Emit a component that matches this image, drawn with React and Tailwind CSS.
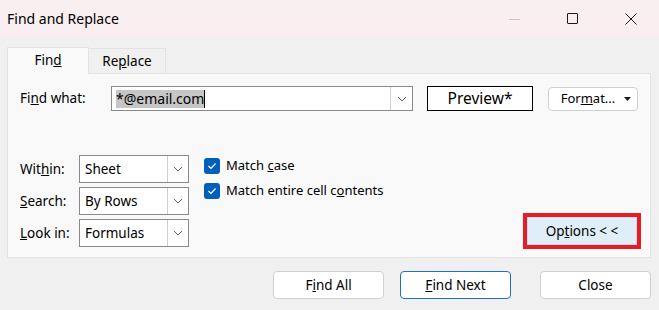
import React from "react";

const font = { fontFamily: '"Segoe UI", "Noto Sans", "Open Sans", sans-serif' };

function Chevron({ className = "" }) {
  return (
    <svg width="10" height="6" viewBox="0 0 10 6" className={className}>
      <path d="M1 1 L5 5 L9 1" fill="none" stroke="#606060" strokeWidth="1" />
    </svg>
  );
}

function Select({ value }) {
  return (
    <div className="flex w-[110px] h-[28px] bg-white border border-[#8a8a8a]">
      <div className="flex-1 flex items-center pl-[5px] text-[13.5px] text-black">{value}</div>
      <div className="w-[21px] flex items-center justify-center border-l border-[#cfcfcf] bg-white">
        <Chevron />
      </div>
    </div>
  );
}

function Check({ children }) {
  return (
    <div className="flex items-center gap-[6px] h-[16px]">
      <div className="w-[16px] h-[16px] rounded-[3px] bg-[#005fb8] flex items-center justify-center">
        <svg width="10" height="8" viewBox="0 0 10 8">
          <path d="M1.5 4 L4 6.5 L8.5 1.5" fill="none" stroke="white" strokeWidth="1.2" />
        </svg>
      </div>
      <span className="text-[13px] text-black">{children}</span>
    </div>
  );
}

function Btn({ children, primary }) {
  return (
    <div
      className={
        "w-[111px] h-[28px] rounded-[4px] bg-white flex items-center justify-center text-[13.5px] text-black border " +
        (primary ? "border-[#1d6fc4]" : "border-[#d0d0d0]")
      }
    >
      {children}
    </div>
  );
}

export default function App() {
  return (
    <div className="w-[659px] h-[310px] bg-[#f0f0f0] flex flex-col overflow-hidden" style={font}>
      {/* title bar */}
      <div className="h-[37px] bg-[#f9eef0] flex items-center">
        <div className="pl-[7px] text-[14px] text-black flex-1">Find and Replace</div>
        <div className="w-[11px] h-px bg-[#c4c4c4] mr-[47px] mt-[2px]" />
        <div className="w-[11px] h-[11px] border border-[#1a1a1a] rounded-[1px] mr-[47px]" />
        <svg width="12" height="12" viewBox="0 0 12 12" className="mr-[22px]">
          <path d="M0.5 0.5 L11.5 11.5 M11.5 0.5 L0.5 11.5" stroke="#1a1a1a" strokeWidth="1" />
        </svg>
      </div>

      <div className="pl-[7px] pt-[9px]">
        {/* tabs */}
        <div className="flex items-end h-[27px]">
          <div className="w-[82px] h-[27px] bg-[#f9f9f9] border border-b-0 border-[#e3e3e3] flex items-center justify-center text-[13.5px] text-black relative z-10 -mb-px pb-[1px]">
            Fin<span className="underline">d</span>
          </div>
          <div className="w-[77px] h-[25px] bg-[#f0f0f0] border border-l-0 border-b-0 border-[#e3e3e3] flex items-center justify-center text-[13.5px] text-black">
            Re<span className="underline">p</span>lace
          </div>
        </div>

        {/* panel */}
        <div className="w-[644px] h-[185px] bg-[#f9f9f9] border border-[#e3e3e3] flex flex-col">
          <div className="flex items-center mt-[12px] h-[25px]">
            <div className="w-[103px] pl-[12px] text-[13.5px] text-black">
              Fi<span className="underline">n</span>d what:
            </div>
            <div className="w-[302px] h-[25px] bg-white border border-[#8a8a8a] flex">
              <div className="flex-1 flex items-center pl-[4px]">
                <span className="bg-[#c6c6c6] text-[14px] text-black leading-[18px]">*@email.com</span>
                <span className="w-px h-[18px] bg-black" />
              </div>
              <div className="w-[22px] flex items-center justify-center border-l border-[#cfcfcf]">
                <Chevron />
              </div>
            </div>
            <div className="ml-[14px] w-[106px] h-[25px] border border-black bg-white flex items-center justify-center text-[15.5px] text-black">
              Preview*
            </div>
            <div className="ml-[15px] w-[90px] h-[24px] rounded-[4px] border border-[#d0d0d0] bg-white flex items-center text-[13px] text-black">
              <span className="flex-1 text-center pl-[3px]">
                For<span className="underline">m</span>at...
              </span>
              <svg width="7" height="4" viewBox="0 0 7 4" className="mr-[6px]">
                <path d="M0 0 L7 0 L3.5 4 Z" fill="#1a1a1a" />
              </svg>
            </div>
          </div>

          <div className="flex mt-[44px]">
            <div className="flex flex-col gap-[4px] pl-[12px]">
              <div className="flex items-center">
                <div className="w-[59px] text-[13.5px] text-black">
                  Wit<span className="underline">h</span>in:
                </div>
                <Select value="Sheet" />
              </div>
              <div className="flex items-center">
                <div className="w-[59px] text-[13.5px] text-black">
                  <span className="underline">S</span>earch:
                </div>
                <Select value="By Rows" />
              </div>
              <div className="flex items-center">
                <div className="w-[59px] text-[13.5px] text-black">
                  <span className="underline">L</span>ook in:
                </div>
                <Select value="Formulas" />
              </div>
            </div>

            <div className="flex flex-col gap-[9px] ml-[15px] mt-[3px]">
              <Check>
                Match <span className="underline">c</span>ase
              </Check>
              <Check>
                Match entire cell c<span className="underline">o</span>ntents
              </Check>
            </div>

            <div className="ml-auto mr-[9px] mt-[58px]">
              <div className="w-[118px] h-[36px] border-[4px] border-[#e81c24] bg-white flex">
                <div className="flex-1 bg-[#e0eef9] border border-[#c5dcf2] flex items-center justify-center text-[13.5px] text-black">
                  Op<span className="underline">t</span>ions &lt; &lt;
                </div>
              </div>
            </div>
          </div>
        </div>

        {/* bottom buttons */}
        <div className="flex mt-[13px] ml-[266px] gap-[16px]">
          <Btn>
            F<span className="underline">i</span>nd All
          </Btn>
          <Btn primary>
            <span className="underline">F</span>ind Next
          </Btn>
          <div className="ml-[13px]">
            <Btn>Close</Btn>
          </div>
        </div>
      </div>
    </div>
  );
}
